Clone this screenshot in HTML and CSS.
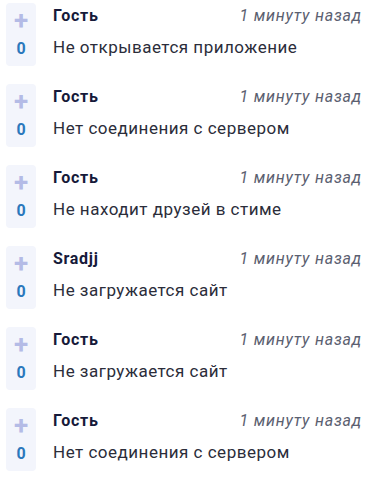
FILE: index.html
```html
<!DOCTYPE html>
<html lang="ru">
  <head>
    <meta charset="UTF-8" />
    <meta name="viewport" content="width=device-width, initial-scale=1.0" />
    <title>Вопросы</title>
    <link rel="stylesheet" href="styles.css">
  </head>
  <body>
    <ul class="questions">
      <li class="question">
        <div class="vote"><span class="vote-plus">+</span><span class="vote-count">0</span></div>
        <div class="question-body">
          <div class="question-head"><span class="author">Гость</span><span class="time">1 минуту назад</span></div>
          <div class="question-text">Не открывается приложение</div>
        </div>
      </li>
      <li class="question">
        <div class="vote"><span class="vote-plus">+</span><span class="vote-count">0</span></div>
        <div class="question-body">
          <div class="question-head"><span class="author">Гость</span><span class="time">1 минуту назад</span></div>
          <div class="question-text">Нет соединения с сервером</div>
        </div>
      </li>
      <li class="question">
        <div class="vote"><span class="vote-plus">+</span><span class="vote-count">0</span></div>
        <div class="question-body">
          <div class="question-head"><span class="author">Гость</span><span class="time">1 минуту назад</span></div>
          <div class="question-text">Не находит друзей в стиме</div>
        </div>
      </li>
      <li class="question">
        <div class="vote"><span class="vote-plus">+</span><span class="vote-count">0</span></div>
        <div class="question-body">
          <div class="question-head"><span class="author">Sradjj</span><span class="time">1 минуту назад</span></div>
          <div class="question-text">Не загружается сайт</div>
        </div>
      </li>
      <li class="question">
        <div class="vote"><span class="vote-plus">+</span><span class="vote-count">0</span></div>
        <div class="question-body">
          <div class="question-head"><span class="author">Гость</span><span class="time">1 минуту назад</span></div>
          <div class="question-text">Не загружается сайт</div>
        </div>
      </li>
      <li class="question">
        <div class="vote"><span class="vote-plus">+</span><span class="vote-count">0</span></div>
        <div class="question-body">
          <div class="question-head"><span class="author">Гость</span><span class="time">1 минуту назад</span></div>
          <div class="question-text">Нет соединения с сервером</div>
        </div>
      </li>
    </ul>
  </body>
</html>
```

FILE: styles.css
```css
* {
  box-sizing: border-box;
}

body {
  margin: 0;
  background: #fff;
  font-family: Roboto, "Noto Sans", sans-serif;
  color: #2b2d3a;
}

.questions {
  list-style: none;
  margin: 0;
  padding: 3px 24px 0 6px;
  display: flex;
  flex-direction: column;
  gap: 18px;
}

.question {
  display: flex;
  gap: 17px;
}

.vote {
  width: 30px;
  height: 63px;
  flex-shrink: 0;
  background: #f3f5fc;
  border-radius: 4px;
  display: flex;
  flex-direction: column;
  align-items: center;
  padding-top: 3px;
}

.vote-plus {
  color: #b4bbe6;
  font-size: 26px;
  font-weight: 700;
  line-height: 28px;
}

.vote-count {
  color: #2a78bc;
  font-size: 16px;
  font-weight: 700;
  line-height: 20px;
  margin-top: 5px;
}

.question-body {
  flex: 1;
  display: flex;
  flex-direction: column;
}

.question-head {
  display: flex;
  justify-content: space-between;
  align-items: baseline;
  line-height: 20px;
  margin-top: 3px;
}

.author {
  font-size: 16px;
  font-weight: 700;
  letter-spacing: 0.7px;
  color: #161a3a;
}

.time {
  font-size: 16px;
  font-style: italic;
  letter-spacing: 0.8px;
  color: #5b6070;
}

.question-text {
  font-size: 17px;
  letter-spacing: 0.5px;
  line-height: 22px;
  margin-top: 10px;
}
```
